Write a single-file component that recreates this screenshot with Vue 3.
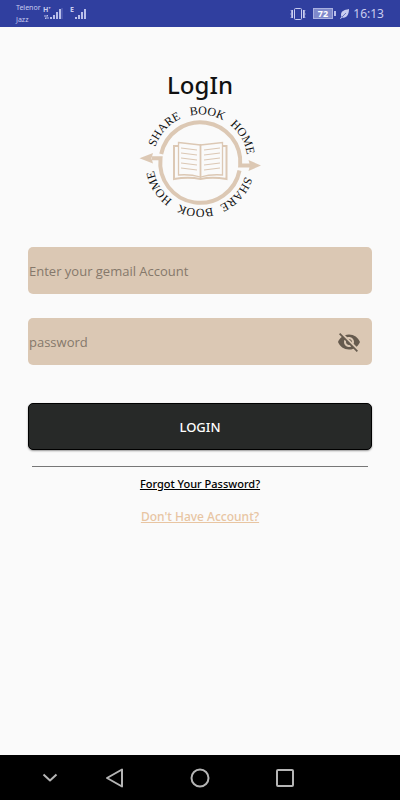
<template>
    <div class="screen">
        <header class="status-bar">
            <div class="carriers">
                <span>Telenor</span>
                <span>Jazz</span>
            </div>
            <svg class="signals" width="48" height="16" viewBox="0 0 48 16" aria-hidden="true">
                <text x="0" y="6" class="net">H⁺</text>
                <path d="M1 10h4l-1-1M6 12H2l1 1" class="data" />
                <path v-for="(bar, i) in bars" :key="i" :d="bar" class="bar" />
                <path d="M19 2v11" class="bar faint" />
                <text x="27" y="6" class="net">E</text>
                <g transform="translate(25 0)">
                    <path v-for="(bar, i) in bars" :key="i" :d="bar" class="bar" />
                </g>
            </svg>
            <div class="status-right">
                <svg width="16" height="14" viewBox="0 0 16 14" class="line-icon" aria-hidden="true">
                    <rect x="4.500" y="1.500" width="7" height="11" rx="1" />
                    <path d="M1 3l1 2-1 2 1 2-1 2M15 3l-1 2 1 2-1 2 1 2" />
                    <path d="M2.500 3v8M13.500 3v8" />
                </svg>
                <svg width="24" height="12" viewBox="0 0 24 12" aria-hidden="true">
                    <rect x="0.500" y="0.500" width="19" height="10" class="cell" />
                    <path d="M22 3v5" class="bar" />
                    <text x="10" y="9" class="level">72</text>
                </svg>
                <svg width="10" height="10" viewBox="0 0 10 10" aria-hidden="true">
                    <path d="M9 0C4 1 1 2 1 6c0 .8.2 1.300.6 1.800L0 9.500l.6.5L2.200 8.500C6.500 9.500 9 6 9 0z" fill="#c9cdf0" />
                    <path d="M2 8L6 4" stroke="#303f9f" stroke-width="0.600" />
                </svg>
                <span class="clock">16:13</span>
            </div>
        </header>

        <main class="content">
            <h1>LogIn</h1>
            <svg class="logo" width="124" height="120" viewBox="138 102 124 120" role="img" aria-label="Share Book Home">
                <path id="arc-top" d="M153 161.800A47.300 47.300 0 0 1 247.600 161.800A47.300 47.300 0 0 1 153 161.800" fill="none" />
                <path id="arc-bottom" d="M247.600 161.800A47.300 47.300 0 0 1 153 161.800A47.300 47.300 0 0 1 247.600 161.800" fill="none" />
                <text v-for="word in words" :key="word.arc + word.text" class="ring-text">
                    <textPath :href="word.arc" :startOffset="word.start">{{ word.text }}</textPath>
                </text>
                <g fill="none" stroke="#dcc8b4" stroke-width="4">
                    <path d="M161.200 154A40 40 0 0 1 240.200 165.500H250" />
                    <path d="M239.500 170.500A40 40 0 0 1 160.500 158.300H152" />
                </g>
                <path d="M139.500 158.300L153 153L151.500 158.300L153 163.500zM261 165.500L248.500 160L250 165.500L248.500 171z" fill="#dcc8b4" />
                <g fill="none" stroke="#dcc8b4">
                    <path d="M178 146H174V179C183 177.500 193 177.500 200.500 179C208 177.500 217 177.500 226.500 179V146H223" stroke-width="2" />
                    <path d="M178.500 142.500L200.500 145L222.500 142.500V175Q211 174 200.500 177Q190 174 178.500 175z" stroke-width="1.300" />
                    <path d="M200.500 144V178" stroke-width="1.800" />
                    <path v-for="y in lines" :key="y" :d="`M181 ${y}L197 ${y + 2}M204 ${y + 2}L220 ${y}`" stroke-width="1.200" />
                </g>
            </svg>

            <form @submit.prevent>
                <input v-model="email" type="email" class="field" placeholder="Enter your gemail Account" aria-label="Enter your gemail Account">
                <div class="password">
                    <input v-model="password" :type="visible ? 'text' : 'password'" class="field" placeholder="password" aria-label="password">
                    <button type="button" class="toggle" aria-label="Show password" @click="visible = !visible">
                        <svg width="24" height="24" viewBox="0 0 24 24" aria-hidden="true">
                            <path d="M12 7c2.760 0 5 2.240 5 5 0 .65-.13 1.260-.36 1.830l2.920 2.920c1.510-1.260 2.700-2.890 3.430-4.750-1.730-4.390-6-7.500-11-7.500-1.400 0-2.740.25-3.980.7l2.160 2.160C10.740 7.130 11.350 7 12 7zM2 4.270l2.280 2.280.46.46C3.080 8.300 1.780 10.020 1 12c1.730 4.390 6 7.500 11 7.500 1.550 0 3.030-.3 4.380-.84l.42.42L19.730 22 21 20.730 3.270 3 2 4.270zM7.530 9.800l1.550 1.550c-.05.21-.08.43-.08.65 0 1.660 1.340 3 3 3 .22 0 .44-.03.65-.08l1.550 1.550c-.67.33-1.410.53-2.200.53-2.760 0-5-2.240-5-5 0-.79.2-1.530.53-2.200zm4.310-.78l3.150 3.150.02-.16c0-1.660-1.340-3-3-3l-.17.01z" />
                        </svg>
                    </button>
                </div>
                <button type="submit" class="login">LOGIN</button>
            </form>

            <hr>
            <a href="#" class="forgot">Forgot Your Password?</a>
            <a href="#" class="signup">Don't Have Account?</a>
        </main>

        <nav class="nav-bar">
            <button type="button" class="hide" aria-label="Hide">
                <svg width="20" height="20" viewBox="0 0 20 20"><path d="M3.500 6.500L10 12.500L16.500 6.500" /></svg>
            </button>
            <div class="nav-keys">
                <button type="button" aria-label="Back">
                    <svg width="20" height="20" viewBox="0 0 20 20"><path d="M17 1.500V18.500L2 10z" /></svg>
                </button>
                <button type="button" aria-label="Home">
                    <svg width="20" height="20" viewBox="0 0 20 20"><circle cx="10" cy="10" r="8.500" /></svg>
                </button>
                <button type="button" aria-label="Recent apps">
                    <svg width="20" height="20" viewBox="0 0 20 20"><rect x="2" y="2" width="16" height="16" rx="1" /></svg>
                </button>
            </div>
        </nav>
    </div>
</template>

<script setup>
import { ref } from 'vue'

const email = ref('')
const password = ref('')
const visible = ref(false)

const bars = ['M8 11v2', 'M11 9v4', 'M14 6v7', 'M17 3v10']
const lines = [148, 153, 158, 163, 168]
const words = [
    { arc: '#arc-top', start: 15, text: 'SHARE' },
    { arc: '#arc-top', start: 64, text: 'BOOK' },
    { arc: '#arc-top', start: 106, text: 'HOME' },
    { arc: '#arc-bottom', start: 15, text: 'SHARE' },
    { arc: '#arc-bottom', start: 62, text: 'BOOK' },
    { arc: '#arc-bottom', start: 104, text: 'HOME' }
]
</script>

<style>
body {
    margin: 0;
}
</style>

<style scoped>
.screen {
    display: flex;
    flex-direction: column;
    min-height: 100vh;
    background: #fafafa;
    font-family: "Noto Sans", "Open Sans", sans-serif;
}

.status-bar {
    display: flex;
    align-items: center;
    height: 27px;
    padding: 0 16px;
    box-sizing: border-box;
    background: #303f9f;
    color: #c9cdf0;
}

.carriers {
    display: flex;
    flex-direction: column;
    font-size: 7px;
    line-height: 12px;
}

.signals {
    margin-left: 2px;
}

.net {
    fill: #c9cdf0;
    font-size: 7px;
    font-weight: bold;
}

.bar {
    stroke: #b9bfea;
    stroke-width: 2;
}

.faint {
    stroke: #6470bd;
    stroke-width: 1;
}

.data {
    fill: none;
    stroke: #b9bfea;
}

.status-right {
    display: flex;
    align-items: center;
    gap: 3px;
    margin-left: auto;
}

.line-icon {
    margin-right: 4px;
    fill: none;
    stroke: #c9cdf0;
}

.cell {
    fill: #7f89cb;
    stroke: #aab1e0;
}

.level {
    fill: #fff;
    font-size: 9px;
    font-weight: bold;
    text-anchor: middle;
}

.clock {
    font-size: 12px;
    line-height: 16px;
}

.content {
    display: flex;
    flex: 1;
    flex-direction: column;
    align-items: center;
    padding: 40px 28px 0;
}

h1 {
    margin: 0;
    color: #111;
    font-size: 24px;
    font-weight: 500;
    line-height: 35px;
}

.ring-text {
    fill: #111;
    font-family: "Liberation Serif", serif;
    font-size: 12px;
}

form {
    display: flex;
    flex-direction: column;
    align-self: stretch;
    gap: 24px;
    margin-top: 25px;
}

.field {
    width: 100%;
    height: 47px;
    box-sizing: border-box;
    padding: 0 1px;
    border: 0;
    border-radius: 5px;
    background: #dbc8b4;
    color: #222;
    font: 13px "Open Sans", sans-serif;
}

.field::placeholder {
    color: #85786b;
    opacity: 1;
}

.password {
    position: relative;
}

.toggle {
    position: absolute;
    top: 12px;
    right: 11px;
    display: flex;
    padding: 0;
    border: 0;
    background: none;
    cursor: pointer;
}

.toggle svg {
    fill: #665b4e;
}

.login {
    height: 47px;
    margin-top: 14px;
    border: 1px solid #000;
    border-radius: 5px;
    background: #272928;
    box-shadow: 0 1px 2px rgba(0, 0, 0, 0.4);
    color: #fff;
    font: 500 13px "Noto Sans", sans-serif;
    cursor: pointer;
}

hr {
    align-self: stretch;
    height: 1px;
    margin: 16px 4px 8px;
    border: 0;
    background: #777;
}

a {
    font-size: 12px;
    font-weight: 500;
    line-height: 17px;
}

.forgot {
    color: #000;
    font-size: 11px;
}

.signup {
    margin-top: 16px;
    color: #e8c5a2;
}

.nav-bar {
    display: flex;
    align-items: center;
    justify-content: center;
    height: 45px;
    background: #000;
}

.nav-keys {
    display: flex;
    gap: 65px;
}

.nav-bar button {
    display: flex;
    padding: 0;
    border: 0;
    background: none;
}

.nav-bar .hide {
    margin: 0 45px 0 -65px;
}

.nav-bar svg {
    fill: none;
    stroke: #b5b5b5;
    stroke-width: 2;
    stroke-linejoin: round;
}
</style>
